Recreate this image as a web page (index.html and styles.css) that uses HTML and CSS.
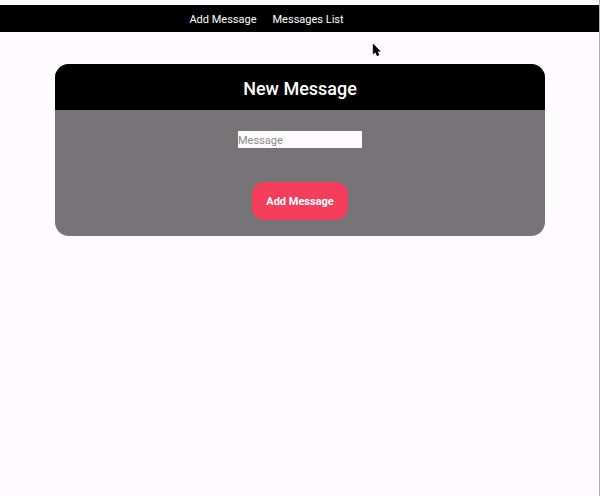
FILE: index.html
```html
<!DOCTYPE html>
<html lang="en">
<head>
  <meta charset="utf-8">
  <meta name="viewport" content="width=device-width, initial-scale=1">
  <title>New Message</title>
  <link rel="stylesheet" href="styles.css">
</head>
<body>
  <nav class="navbar">
    <a class="navbar-link" href="#add">Add Message</a>
    <a class="navbar-link" href="#list">Messages List</a>
  </nav>
  <main class="page">
    <section class="card" id="add">
      <h1 class="card-title">New Message</h1>
      <form class="card-form">
        <input class="message-input" type="text" placeholder="Message" aria-label="Message">
        <button class="submit-button" type="button">Add Message</button>
      </form>
    </section>
  </main>
  <svg class="pointer" viewBox="0 0 12 18" aria-hidden="true">
    <path d="M1.5 1.5V13L4.2 10.6L6.2 15.2L8.2 14.3L6.2 9.8H9.6Z" fill="#000" stroke="#000" stroke-width="1"/>
  </svg>
</body>
</html>
```
FILE: styles.css
```css
* {
  box-sizing: border-box;
}

body {
  margin: 0;
  padding-top: 5px;
  min-height: 100vh;
  border-right: 1px solid #b0afb1;
  background: #fdfbfe;
  color: #fff;
  font-family: Roboto, "Liberation Sans", sans-serif;
  font-size: 11px;
}

.navbar {
  display: flex;
  justify-content: center;
  gap: 16px;
  margin-right: -1px;
  padding: 7px 67px 4px 0;
  background: #000;
  line-height: 16px;
}

.navbar-link {
  color: #fff;
  text-decoration: none;
}

.page {
  padding: 32px 54px 0 55px;
}

.card {
  overflow: hidden;
  border-radius: 14px;
  background: #767476;
}

.card-title {
  margin: 0;
  padding: 14px 12px 10px;
  background: #000;
  font-size: 18px;
  font-weight: 500;
  line-height: 22px;
  text-align: center;
}

.card-form {
  display: flex;
  flex-direction: column;
  align-items: center;
  gap: 34px;
  padding: 21px 16px 16px;
}

.message-input {
  width: 124px;
  height: 17px;
  padding: 2px 0 0;
  border: 0;
  border-radius: 0;
  background: #fdfbfe;
  color: #222;
  font: inherit;
}

.message-input::placeholder {
  color: #8b898c;
  opacity: 1;
}

.submit-button {
  padding: 13px 14px 11px;
  border: 0;
  border-radius: 12px;
  background: #f43e5c;
  color: #fff;
  font: inherit;
  font-weight: 700;
  line-height: 14px;
}

.pointer {
  position: absolute;
  top: 43px;
  left: 372px;
  width: 10px;
  height: 15px;
}
```
